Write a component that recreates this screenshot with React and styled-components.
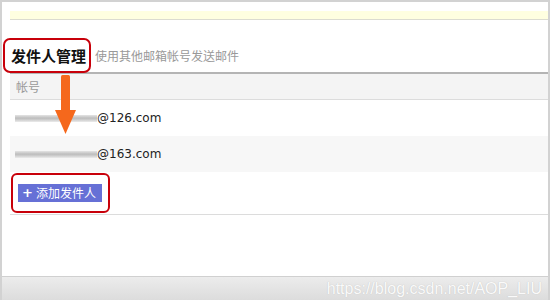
import React from "react";
import styled, { createGlobalStyle } from "styled-components";

const GlobalStyle = createGlobalStyle`
  html, body {
    margin: 0;
    padding: 0;
    background: #fff;
  }
  * {
    box-sizing: border-box;
  }
`;

const accounts = [
  { domain: "@126.com", striped: false },
  { domain: "@163.com", striped: true },
];

function App() {
  return (
    <>
      <GlobalStyle />
      <Frame>
        <Main>
          <Notice />
          <TitleRow>
            <Heading>发件人管理</Heading>
            <Hint>使用其他邮箱帐号发送邮件</Hint>
          </TitleRow>
          <HeaderRow>帐号</HeaderRow>
          {accounts.map((a) => (
            <Row key={a.domain} striped={a.striped}>
              <Masked />
              <Email>{a.domain}</Email>
            </Row>
          ))}
          <ActionRow>
            <Highlight>
              <AddButton>
                <Plus>+</Plus>添加发件人
              </AddButton>
            </Highlight>
          </ActionRow>
          <Arrow width="22" height="60" viewBox="0 0 22 60">
            <rect x="6" y="0" width="9" height="38" rx="1.5" fill="#f5681c" />
            <polygon points="0,35 21,35 10.5,59" fill="#f5681c" />
          </Arrow>
        </Main>
        <Footer>
          <Watermark>https://blog.csdn.net/AOP_LIU</Watermark>
        </Footer>
      </Frame>
    </>
  );
}

const Frame = styled.div`
  width: 550px;
  height: 300px;
  display: flex;
  flex-direction: column;
  border: 2px solid #d2d2d2;
  border-bottom: none;
  border-right-width: 2px;
  font-family: "DejaVu Sans", "Noto Sans CJK SC", sans-serif;
  overflow: hidden;
`;

const Main = styled.div`
  position: relative;
  flex: 1;
  padding-left: 8px;
`;

const Notice = styled.div`
  margin-top: 9px;
  height: 9px;
  background: #ffffe0;
  border-bottom: 1px solid #dcdcd0;
`;

const TitleRow = styled.div`
  display: flex;
  align-items: flex-end;
  height: 54px;
  border-bottom: 2px solid #b4b4b4;
`;

const Heading = styled.h2`
  margin: 0 4px -1px -7px;
  padding: 6px 3px 5px 6px;
  border: 2px solid #c8000a;
  border-radius: 7px;
  font-family: "Noto Sans CJK SC", sans-serif;
  font-size: 15px;
  font-weight: bold;
  line-height: 20px;
  color: #111;
  background: #fff;
`;

const Hint = styled.span`
  font-family: "Noto Sans CJK SC", sans-serif;
  font-size: 12px;
  line-height: 16px;
  color: #999;
  padding-bottom: 8px;
`;

const HeaderRow = styled.div`
  height: 26px;
  display: flex;
  align-items: center;
  padding-left: 6px;
  background: #f4f4f4;
  border-bottom: 1px solid #dcdcdc;
  font-family: "Noto Sans CJK SC", sans-serif;
  font-size: 12px;
  color: #999;
`;

const Row = styled.div`
  height: 36px;
  display: flex;
  align-items: center;
  padding-left: 5px;
  background: ${(p) => (p.striped ? "#f7f7f7" : "#fff")};
`;

const Masked = styled.span`
  width: 82px;
  height: 7px;
  margin-top: 1px;
  background: linear-gradient(
    to bottom,
    #e4e4e4 0%,
    #bdbdbd 45%,
    #cfcfcf 70%,
    #ececec 100%
  );
`;

const Email = styled.span`
  font-size: 12px;
  color: #222;
`;

const ActionRow = styled.div`
  height: 43px;
  display: flex;
  align-items: center;
  padding-left: 1px;
  border-bottom: 1px solid #dcdcdc;
`;

const Highlight = styled.div`
  width: 99px;
  height: 40px;
  display: flex;
  align-items: center;
  padding-left: 5px;
  border: 2px solid #c8000a;
  border-radius: 6px;
`;

const AddButton = styled.button`
  display: flex;
  align-items: center;
  gap: 3px;
  height: 18px;
  padding: 0 6px 0 4px;
  border: none;
  background: #6670d6;
  color: #fff;
  font-family: "Noto Sans CJK SC", sans-serif;
  font-size: 12px;
  line-height: 18px;
`;

const Plus = styled.span`
  font-family: "DejaVu Sans", sans-serif;
  font-weight: bold;
  font-size: 13px;
`;

const Arrow = styled.svg`
  position: absolute;
  left: 53px;
  top: 73px;
`;

const Footer = styled.div`
  height: 24px;
  display: flex;
  align-items: center;
  justify-content: flex-end;
  padding-right: 6px;
  border-top: 1px solid #d0d0d0;
  background: linear-gradient(to bottom, #ececec, #dcdcdc);
`;

const Watermark = styled.span`
  font-family: "Liberation Sans", Arial, sans-serif;
  font-size: 16px;
  color: #fafafa;
  text-shadow: 0 0 1px #bbb;
`;

export default App;
